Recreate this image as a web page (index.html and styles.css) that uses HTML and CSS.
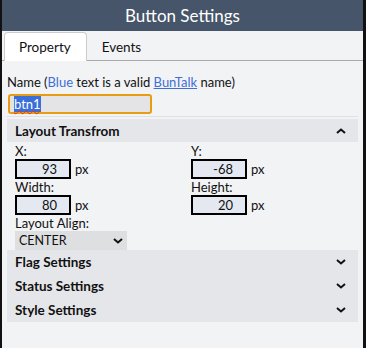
FILE: index.html
```html
<!DOCTYPE html>
<html lang="en">
<head>
    <meta charset="UTF-8">
    <title>Button Settings</title>
    <link rel="stylesheet" href="styles.css">
</head>
<body>
    <div class="panel">
        <div class="header">Button Settings</div>
        <div class="tabs">
            <div class="tab active">Property</div>
            <div class="tab">Events</div>
        </div>

        <div class="content">
            <div class="name-label">Name (<span class="blue">Blue</span> text is a valid <a href="#">BunTalk</a> name)</div>
            <div class="name-input"><span class="selected">btn1</span></div>
            <div class="divider"></div>

            <div class="section">
                <div class="section-head">
                    <span>Layout Transfrom</span>
                    <svg class="chev" width="10" height="6" viewBox="0 0 10 6"><path d="M1 5 L5 1.5 L9 5" fill="none" stroke="#111" stroke-width="2"/></svg>
                </div>
                <div class="fields">
                    <div class="field">
                        <label>X:</label>
                        <div class="row"><div class="num">93</div><span>px</span></div>
                    </div>
                    <div class="field">
                        <label>Y:</label>
                        <div class="row"><div class="num">-68</div><span>px</span></div>
                    </div>
                    <div class="field">
                        <label>Width:</label>
                        <div class="row"><div class="num">80</div><span>px</span></div>
                    </div>
                    <div class="field">
                        <label>Height:</label>
                        <div class="row"><div class="num">20</div><span>px</span></div>
                    </div>
                </div>
                <div class="field align">
                    <label>Layout Align:</label>
                    <div class="select">
                        <span>CENTER</span>
                        <svg width="10" height="6" viewBox="0 0 10 6"><path d="M1 1 L5 4.5 L9 1" fill="none" stroke="#111" stroke-width="2"/></svg>
                    </div>
                </div>
            </div>

            <div class="collapsed">
                <div class="section-head">
                    <span>Flag Settings</span>
                    <svg class="chev" width="10" height="6" viewBox="0 0 10 6"><path d="M1 1 L5 4.5 L9 1" fill="none" stroke="#111" stroke-width="2"/></svg>
                </div>
                <div class="section-head">
                    <span>Status Settings</span>
                    <svg class="chev" width="10" height="6" viewBox="0 0 10 6"><path d="M1 1 L5 4.5 L9 1" fill="none" stroke="#111" stroke-width="2"/></svg>
                </div>
                <div class="section-head">
                    <span>Style Settings</span>
                    <svg class="chev" width="10" height="6" viewBox="0 0 10 6"><path d="M1 1 L5 4.5 L9 1" fill="none" stroke="#111" stroke-width="2"/></svg>
                </div>
            </div>
        </div>
    </div>
</body>
</html>
```

FILE: styles.css
```css
body {
    margin: 0;
    font-family: Lato, "Open Sans", sans-serif;
    font-size: 13px;
    color: #111;
}

.panel {
    height: 348px;
    width: 361px;
    background-color: #f2f3f5;
    border-left: 2px solid #111;
    border-right: 3px solid #111;
}

.header {
    height: 31px;
    background-color: #465569;
    color: #fff;
    font-size: 17px;
    line-height: 31px;
    text-align: center;
}

.tabs {
    display: flex;
    padding: 1px 0 0 2px;
    border-bottom: 1px solid #aaa;
    font-size: 13.5px;
}

.tab {
    height: 27px;
    line-height: 28px;
    padding: 0 15px 0 14px;
    border: 1px solid transparent;
    border-bottom: none;
}

.tab.active {
    background-color: #fff;
    border-color: #ccc;
    border-radius: 4px 4px 0 0;
    margin-bottom: -1px;
    height: 28px;
}

.content {
    padding: 0 5px;
}

.name-label {
    margin-top: 12px;
    line-height: 18px;
}

.blue, .name-label a {
    color: #3e6ed8;
}

.name-input {
    width: 136px;
    height: 16px;
    margin: 3px 0 0 1px;
    padding: 0 0 0 4px;
    background-color: #e4e4e6;
    border: 2px solid #e89c12;
    border-radius: 3px;
    line-height: 16px;
}

.selected {
    background-color: #3a6fd9;
    color: #fff;
    text-decoration: underline wavy #e03030;
    text-decoration-thickness: 1px;
}

.divider {
    height: 1px;
    margin: 2px 0 0 0;
    background-color: #e0e1e4;
}

.section-head {
    display: flex;
    justify-content: space-between;
    align-items: center;
    height: 23px;
    padding: 0 12px 0 8px;
    background-color: #e5e6ea;
    font-size: 13.5px;
    font-weight: bold;
}

.section {
    margin-top: 2px;
}

.fields {
    display: grid;
    grid-template-columns: 176px 1fr;
    padding: 1px 0 0 8px;
}

.field label {
    display: block;
    line-height: 16px;
}

.row {
    display: flex;
    align-items: center;
    gap: 4px;
}

.num {
    width: 40px;
    height: 16px;
    padding-right: 12px;
    background-color: #e4e9f1;
    border: 2px solid #000;
    text-align: right;
    line-height: 16px;
}

.align {
    padding-left: 8px;
}

.select {
    display: flex;
    justify-content: space-between;
    align-items: center;
    width: 104px;
    height: 19px;
    padding: 0 4px;
    background-color: #dedfe1;
    font-size: 12.5px;
}

.collapsed .section-head {
    height: 24px;
}
```
